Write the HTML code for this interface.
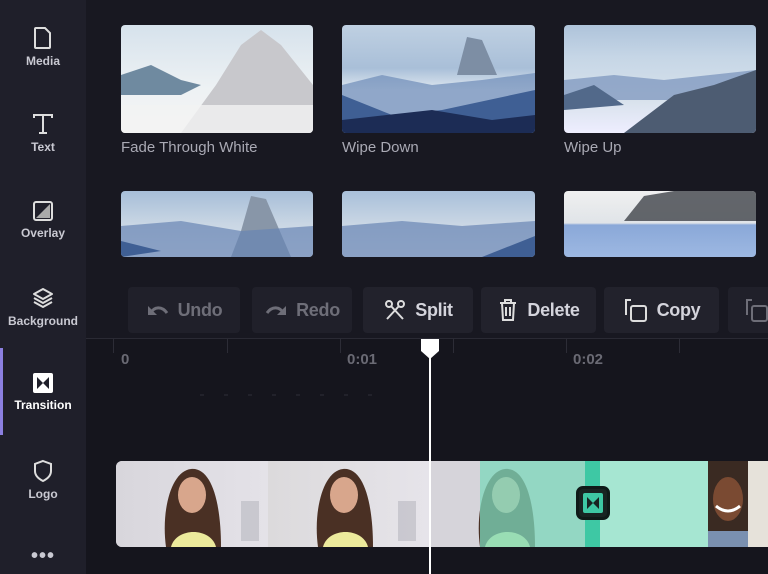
<!DOCTYPE html>
<html><head><meta charset="utf-8"><style>
*{margin:0;padding:0;box-sizing:border-box}
body{width:768px;height:574px;overflow:hidden;background:#181821;font-family:"Liberation Sans",sans-serif;position:relative}
.side{position:absolute;left:0;top:0;width:86px;height:574px;background:#1f1f2a}
.item{position:absolute;left:0;width:86px;text-align:center;color:#c9c9d2;font-size:12px;font-weight:bold}
.item svg{display:block;margin:0 auto 4px}
.thumb{position:absolute;border-radius:4px;overflow:hidden}
.lbl{position:absolute;color:#a9a9b4;font-size:15px}
.btn{position:absolute;top:287px;height:46px;background:#20202a;border-radius:4px;color:#6e6e78;font-size:18px;font-weight:bold;display:flex;align-items:center;justify-content:center;gap:8px;letter-spacing:-0.3px}
.btn.on{color:#d4d4dc;background:#22222c}
.tl{position:absolute;left:86px;top:338px;width:682px;height:236px;background:#15151d;border-top:1px solid #2a2a34}
.tick{position:absolute;top:339px;width:1px;height:14px;background:#2c2c36}
.tt{position:absolute;top:351px;color:#6a6a74;font-size:15px;font-weight:bold}
</style></head><body>
<div class="side">
 <div class="item" style="top:26px"><svg width="22" height="24" viewBox="0 0 22 24"><path d="M4 2h9l5 5v14a1 1 0 0 1-1 1H4a1 1 0 0 1-1-1V3a1 1 0 0 1 1-1z" fill="none" stroke="#ddd" stroke-width="2"/></svg>Media</div>
 <div class="item" style="top:112px"><svg width="24" height="24" viewBox="0 0 24 24"><path d="M3 6V3h18v3M12 3v18M8 21h8" fill="none" stroke="#ddd" stroke-width="2"/></svg>Text</div>
 <div class="item" style="top:200px"><svg width="22" height="22" viewBox="0 0 22 22"><rect x="2" y="2" width="18" height="18" rx="2" fill="none" stroke="#ddd" stroke-width="2"/><path d="M18 4L4 18h14z" fill="#aaa"/></svg>Overlay</div>
 <div class="item" style="top:286px"><svg width="24" height="24" viewBox="0 0 24 24"><path d="M12 3l9 5-9 5-9-5zM3 12l9 5 9-5M3 16l9 5 9-5" fill="none" stroke="#ddd" stroke-width="2" stroke-linejoin="round"/></svg>Background</div>
 <div style="position:absolute;left:0;top:348px;width:3px;height:87px;background:#8b7fe0"></div>
 <div class="item" style="top:372px;color:#fff"><svg width="22" height="22" viewBox="0 0 22 22"><rect x="1" y="1" width="20" height="20" rx="2" fill="#fff"/><path d="M5 5l6 6-6 6zM17 5l-6 6 6 6z" fill="#1f1f2a"/></svg>Transition</div>
 <div class="item" style="top:459px"><svg width="22" height="24" viewBox="0 0 22 24"><path d="M11 2l8 3v7c0 5-4 8-8 10-4-2-8-5-8-10V5z" fill="none" stroke="#ddd" stroke-width="2"/></svg>Logo</div>
 <div class="item" style="top:545px;font-size:20px;letter-spacing:1px">•••</div>
</div>

<div class="thumb" style="left:121px;top:25px;width:192px;height:108px;background:linear-gradient(#d6e2ec,#eef2f4 60%,#f4f4f4)">
<svg width="192" height="108"><path d="M60 108L95 60 120 20 140 5 160 20 192 60V108z" fill="#c8c8cc"/><path d="M0 50L30 40 60 55 80 60 60 70 0 70z" fill="#6f8aa0"/><rect y="80" width="192" height="28" fill="#f2f2f2" opacity=".8"/></svg></div>
<div class="thumb" style="left:342px;top:25px;width:193px;height:108px;background:linear-gradient(#bfd0e2,#a9bfd8 40%,#dfe8f0 60%)">
<svg width="193" height="108"><path d="M115 50L125 12 140 15 155 50z" fill="#7d8ea4"/><path d="M0 60L40 50 90 60 140 55 193 48V108H0z" fill="#6d8bb8" opacity=".7"/><path d="M0 70L50 90 100 85 193 65V108H0z" fill="#3f5f94"/><path d="M0 95L90 85 150 95 193 90V108H0z" fill="#1c2c55"/></svg></div>
<div class="thumb" style="left:564px;top:25px;width:192px;height:108px;background:linear-gradient(#aec3da,#c6d6e6 30%,#d8e2ec 70%,#eef)">
<svg width="192" height="108"><path d="M0 55L50 50 100 55 192 45V75H0z" fill="#7892ba" opacity=".7"/><path d="M0 70L30 60 60 80 0 85z" fill="#52698a"/><path d="M60 108L110 70 150 60 192 45V108z" fill="#4d5c72"/></svg></div>
<div class="lbl" style="left:121px;top:139px">Fade Through White</div>
<div class="lbl" style="left:342px;top:139px">Wipe Down</div>
<div class="lbl" style="left:564px;top:139px">Wipe Up</div>
<div class="thumb" style="left:121px;top:191px;width:192px;height:66px;background:linear-gradient(#a7bed8,#c9d6e4 50%,#dde6ee)">
<svg width="192" height="66"><path d="M120 40L130 5 145 8 170 66H110z" fill="#8896a8"/><path d="M0 35L60 30 120 40 192 35V66H0z" fill="#6885b4" opacity=".7"/><path d="M0 50L40 60 0 66z" fill="#3f5f94"/></svg></div>
<div class="thumb" style="left:342px;top:191px;width:193px;height:66px;background:linear-gradient(#a9c0da,#c9d6e4 50%,#dde6ee)">
<svg width="193" height="66"><path d="M0 35L60 30 120 35 193 30V66H0z" fill="#6885b4" opacity=".7"/><path d="M140 66L193 45V66z" fill="#3f5f94"/></svg></div>
<div class="thumb" style="left:564px;top:191px;width:192px;height:66px;background:linear-gradient(#f0f0f0 0,#e0e4e8 32px,#8aa8d8 34px,#9db8e2 66px)">
<svg width="192" height="66"><path d="M60 30L80 5 110 0 192 0V30z" fill="#4a4e54" opacity=".85"/></svg></div>

<div class="btn" style="left:128px;width:112px"><svg width="24" height="16" viewBox="0 0 24 16"><path d="M4 12c4-8 12-8 17-1" fill="none" stroke="#6e6e78" stroke-width="3"/><path d="M2 4v9h9z" fill="#6e6e78"/></svg>Undo</div>
<div class="btn" style="left:252px;width:100px"><svg width="24" height="16" viewBox="0 0 24 16"><path d="M20 12c-4-8-12-8-17-1" fill="none" stroke="#6e6e78" stroke-width="3"/><path d="M22 4v9h-9z" fill="#6e6e78"/></svg>Redo</div>
<div class="btn on" style="left:363px;width:110px"><svg width="24" height="24" viewBox="0 0 24 24"><circle cx="6" cy="6" r="3" fill="none" stroke="#ddd" stroke-width="2"/><circle cx="18" cy="6" r="3" fill="none" stroke="#ddd" stroke-width="2"/><path d="M8 8l12 13M16 8L4 21" stroke="#ddd" stroke-width="2"/></svg>Split</div>
<div class="btn on" style="left:481px;width:115px"><svg width="22" height="24" viewBox="0 0 22 24"><path d="M3 5h16M8 5V2h6v3M5 5l1 17h10l1-17M9 9v9M13 9v9" fill="none" stroke="#ddd" stroke-width="2"/></svg>Delete</div>
<div class="btn on" style="left:604px;width:115px"><svg width="26" height="26" viewBox="0 0 26 26"><path d="M8 3H3v15" fill="none" stroke="#ddd" stroke-width="2"/><rect x="8" y="9" width="15" height="15" rx="2" fill="none" stroke="#ddd" stroke-width="2"/></svg>Copy</div>
<div class="btn" style="left:728px;width:60px;justify-content:flex-start;padding-left:16px"><svg width="26" height="26" viewBox="0 0 26 26"><path d="M8 3H3v15" fill="none" stroke="#6e6e78" stroke-width="2"/><rect x="8" y="9" width="15" height="15" rx="2" fill="none" stroke="#6e6e78" stroke-width="2"/></svg></div>

<div class="tl"></div>
<div class="tick" style="left:113px"></div><div class="tick" style="left:227px"></div><div class="tick" style="left:340px"></div><div class="tick" style="left:453px"></div><div class="tick" style="left:566px"></div><div class="tick" style="left:679px"></div>
<div class="tt" style="left:121px">0</div>
<div class="tt" style="left:347px">0:01</div>
<div class="tt" style="left:573px">0:02</div>
<div style="position:absolute;left:200px;top:394px;width:180px;height:2px;background:repeating-linear-gradient(90deg,#22222b 0 4px,transparent 4px 24px)"></div>

<div style="position:absolute;left:116px;top:461px;width:660px;height:86px;border-radius:6px;overflow:hidden;background:#d4d2d8">
 <div style="position:absolute;left:0;top:0;width:152px;height:86px;background:linear-gradient(90deg,#d8d6dc,#e4e2e8)"></div>
 <div style="position:absolute;left:152px;top:0;width:162px;height:86px;background:linear-gradient(90deg,#dcdadc,#e6e4ea)"></div>
 <div style="position:absolute;left:314px;top:0;width:50px;height:86px;background:#d6d4da"></div>
 <svg style="position:absolute;left:0;top:0" width="660" height="86">
  <g><path d="M50 86C45 50 55 10 75 8 95 6 105 40 105 86z" fill="#4a3024"/><ellipse cx="76" cy="34" rx="14" ry="18" fill="#d8a68c"/><path d="M55 86c5-20 40-20 45 0z" fill="#ecea9c"/><rect x="125" y="40" width="18" height="40" fill="#b8b8c0" opacity=".6"/></g>
  <g transform="translate(152,0)"><path d="M50 86C45 50 55 10 75 8 95 6 105 40 105 86z" fill="#4a3024"/><ellipse cx="76" cy="34" rx="14" ry="18" fill="#d8a68c"/><path d="M55 86c5-20 40-20 45 0z" fill="#ecea9c"/><rect x="130" y="40" width="18" height="40" fill="#b8b8c0" opacity=".6"/></g>
  <g transform="translate(314,0)"><path d="M50 86C45 50 55 10 75 8 95 6 105 40 105 86z" fill="#4a3024"/><ellipse cx="76" cy="34" rx="14" ry="18" fill="#d8a68c"/><path d="M55 86c5-20 40-20 45 0z" fill="#ecea9c"/></g>
  <rect x="364" y="0" width="105" height="86" fill="#7ed8bc" opacity=".75"/>
  <rect x="469" y="0" width="15" height="86" fill="#3ec8a4"/>
  <rect x="484" y="0" width="108" height="86" fill="#a6e6d2"/>
  <rect x="592" y="0" width="40" height="86" fill="#3a2a22"/>
  <ellipse cx="612" cy="38" rx="15" ry="22" fill="#7a4a32"/>
  <path d="M600 45q12 10 24 0" fill="none" stroke="#fff" stroke-width="3"/>
  <rect x="592" y="70" width="40" height="16" fill="#7a90b0"/>
  <rect x="632" y="0" width="28" height="86" fill="#e6e2da"/>
 </svg>
</div>
<div style="position:absolute;left:576px;top:486px;width:34px;height:34px;border-radius:7px;background:#182422;border:3px solid #0f1a18"></div>
<svg style="position:absolute;left:582px;top:492px" width="22" height="22" viewBox="0 0 22 22"><rect x="1" y="1" width="20" height="20" rx="2" fill="#3ec8a4"/><path d="M5 5l6 6-6 6zM17 5l-6 6 6 6z" fill="#182422"/></svg>

<div style="position:absolute;left:429px;top:355px;width:2px;height:219px;background:#fff"></div>
<svg style="position:absolute;left:420px;top:339px" width="20" height="20"><path d="M1 0h18v12l-9 8-9-8z" fill="#fff"/></svg>
</body></html>
